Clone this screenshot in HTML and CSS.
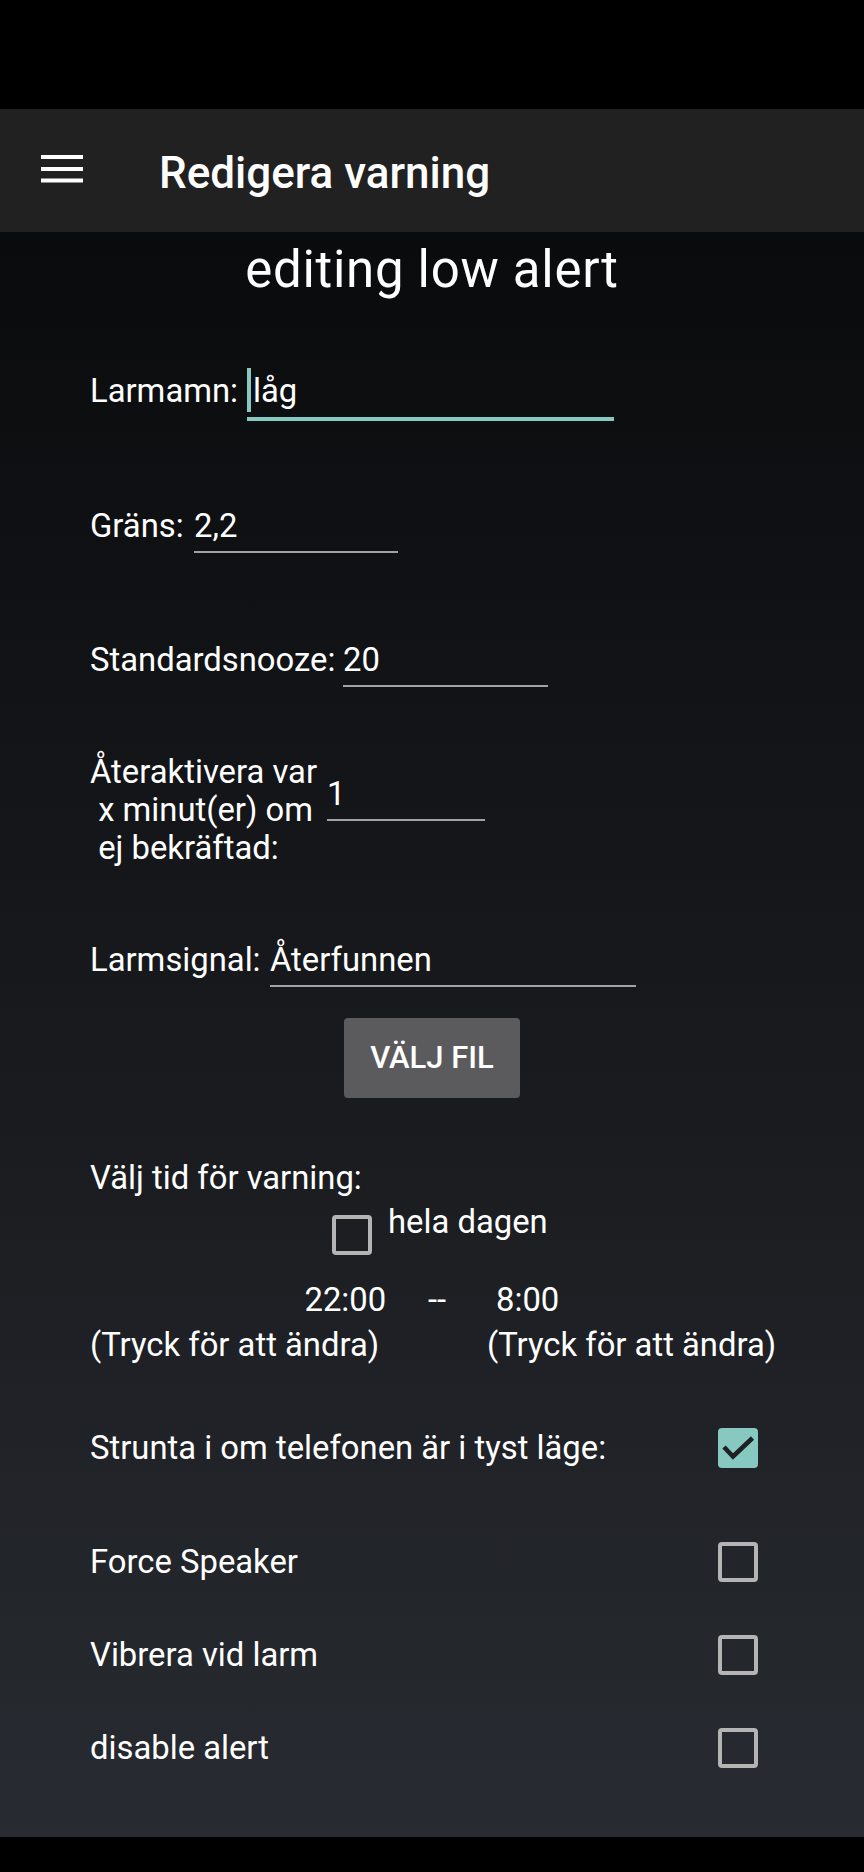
FILE: index.html
```html
<!DOCTYPE html>
<html lang="sv">
<head>
<meta charset="utf-8">
<title>Redigera varning</title>
<link rel="stylesheet" href="styles.css">
</head>
<body>
<div class="screen">
  <div class="statusbar"></div>
  <header class="toolbar">
    <svg class="menu-icon" width="42" height="28" viewBox="0 0 42 28" aria-hidden="true">
      <rect x="0" y="0" width="42" height="4" fill="#fff"/>
      <rect x="0" y="12" width="42" height="4" fill="#fff"/>
      <rect x="0" y="23.5" width="42" height="4" fill="#fff"/>
    </svg>
    <h1 class="title">Redigera varning</h1>
  </header>
  <main class="content">
    <h2 class="heading">editing low alert</h2>

    <div class="field-row row-name">
      <span class="label label-name">Larmamn:</span>
      <span class="field field-focused field-name"><span class="caret"></span>låg</span>
    </div>

    <div class="field-row row-limit">
      <span class="label label-limit">Gräns:</span>
      <span class="field field-limit">2,2</span>
    </div>

    <div class="field-row row-snooze">
      <span class="label label-snooze">Standardsnooze:</span>
      <span class="field field-snooze">20</span>
    </div>

    <div class="field-row row-reactivate">
      <span class="label label-multi label-reactivate">Återaktivera var
 x minut(er) om
 ej bekräftad:</span>
      <span class="field field-reactivate">1</span>
    </div>

    <div class="field-row row-signal">
      <span class="label label-signal">Larmsignal:</span>
      <span class="field field-signal">Återfunnen</span>
    </div>

    <div class="button-wrap">
      <button class="btn">VÄLJ FIL</button>
    </div>

    <div class="text-line row-time-title">Välj tid för varning:</div>

    <div class="allday-row">
      <span class="checkbox allday-box"></span>
      <span class="allday-label">hela dagen</span>
    </div>

    <div class="times-row">
      <span class="time time-start">22:00</span>
      <span class="time time-sep">--</span>
      <span class="time time-end">8:00</span>
    </div>

    <div class="tap-row">
      <span class="tap tap-left">(Tryck för att ändra)</span>
      <span class="tap tap-right">(Tryck för att ändra)</span>
    </div>

    <div class="check-row row-silent">
      <span class="check-label">Strunta i om telefonen är i tyst läge:</span>
      <span class="checkbox checked">
        <svg width="40" height="40" viewBox="0 0 40 40" aria-hidden="true"><polyline points="6,19 15,28.5 34.5,10" fill="none" stroke="#1d2125" stroke-width="4.5"/></svg>
      </span>
    </div>

    <div class="check-row row-speaker">
      <span class="check-label">Force Speaker</span>
      <span class="checkbox"></span>
    </div>

    <div class="check-row row-vibrate">
      <span class="check-label">Vibrera vid larm</span>
      <span class="checkbox"></span>
    </div>

    <div class="check-row row-disable">
      <span class="check-label">disable alert</span>
      <span class="checkbox"></span>
    </div>
  </main>
  <div class="navbar"></div>
</div>
</body>
</html>
```
FILE: styles.css
```css
* { box-sizing: border-box; }

html, body {
  margin: 0;
  padding: 0;
  background: #000;
}

.screen {
  width: 864px;
  height: 1872px;
  display: flex;
  flex-direction: column;
  font-family: Roboto, "Noto Sans", "Liberation Sans", sans-serif;
  color: #fff;
  overflow: hidden;
}

.statusbar {
  height: 109px;
  background: #000;
  flex: none;
}

.toolbar {
  height: 123px;
  flex: none;
  background: #212121;
  display: flex;
  align-items: flex-start;
  padding-left: 41px;
}

.menu-icon {
  margin-top: 46px;
  flex: none;
}

.title {
  margin: 39px 0 0 76px;
  font-size: 44px;
  line-height: 50px;
  font-weight: 500;
  letter-spacing: 0;
  white-space: nowrap;
}

.content {
  height: 1605px;
  flex: none;
  padding: 0 106px 0 90px;
  background: linear-gradient(180deg, #0a0b0d 0%, #16181b 45%, #282b31 100%);
  font-size: 32.8px;
  line-height: 40px;
  overflow: hidden;
}

.heading {
  margin: 7.5px -106px 0 -90px;
  font-size: 51px;
  line-height: 60px;
  letter-spacing: 0.7px;
  font-weight: 400;
  text-align: center;
}

/* text fields */
.field-row {
  display: flex;
  align-items: flex-start;
  white-space: nowrap;
}

.label {
  flex: none;
  line-height: 40px;
}

.label-multi {
  white-space: pre;
  line-height: 38px;
}

.field {
  flex: none;
  position: relative;
  line-height: 40px;
  padding-bottom: 5px;
  border-bottom: 2px solid #a2a2a2;
}

.field-focused {
  padding-left: 6px;
  padding-bottom: 6px;
  border-bottom: 4px solid #87c8c0;
}

.caret {
  position: absolute;
  left: 0;
  top: -3.5px;
  width: 4px;
  height: 44px;
  background: #87c8c0;
}

.row-name { margin-top: 71.9px; }
.label-name { width: 157px; }
.field-name { width: 367px; }

.row-limit { margin-top: 85px; }
.label-limit { width: 104px; }
.field-limit { width: 204px; }

.row-snooze { margin-top: 86.7px; }
.label-snooze { width: 253px; }
.field-snooze { width: 205px; }

.row-reactivate { margin-top: 66.3px; }
.label-reactivate { width: 237px; }
.field-reactivate { width: 158px; margin-top: 21px; }

.row-signal { margin-top: 73px; }
.label-signal { width: 180px; }
.field-signal { width: 366px; }

/* button */
.button-wrap {
  margin: 30.5px -106px 0 -90px;
  display: flex;
  justify-content: center;
}

.btn {
  width: 176px;
  height: 80px;
  border: none;
  border-radius: 4px;
  background: #5b5b5d;
  color: #fff;
  font-family: Roboto, "Noto Sans", "Liberation Sans", sans-serif;
  font-size: 31px;
  font-weight: 500;
  padding: 0;
  display: flex;
  align-items: center;
  justify-content: center;
}

/* time selection */
.row-time-title { margin-top: 60.5px; }

.allday-row {
  margin-top: 4px;
  display: flex;
  align-items: flex-start;
  padding-left: 242px;
}

.allday-box {
  margin-top: 12.5px;
}

.allday-label {
  margin-left: 16px;
}

.times-row {
  margin-top: 25.5px;
  display: flex;
  white-space: nowrap;
}

.time { flex: none; }
.time-start { margin-left: 214.5px; width: 123.5px; }
.time-sep { width: 68px; }

.tap-row {
  margin-top: 5px;
  display: flex;
  white-space: nowrap;
}

.tap { flex: none; }
.tap-left { width: 397px; }

/* checkbox rows */
.check-row {
  display: flex;
  align-items: center;
  justify-content: space-between;
  height: 40px;
}

.row-silent { margin-top: 62.5px; }
.row-speaker { margin-top: 74.5px; }
.row-vibrate { margin-top: 53px; }
.row-disable { margin-top: 53px; }

.checkbox {
  flex: none;
  display: block;
  width: 40px;
  height: 40px;
  border: 4px solid #b4b4b4;
  border-radius: 4px;
}

.checkbox.checked {
  border: none;
  background: #87c8c0;
}

.checkbox svg { display: block; }

.navbar {
  height: 35px;
  flex: none;
  background: #000;
}
```
